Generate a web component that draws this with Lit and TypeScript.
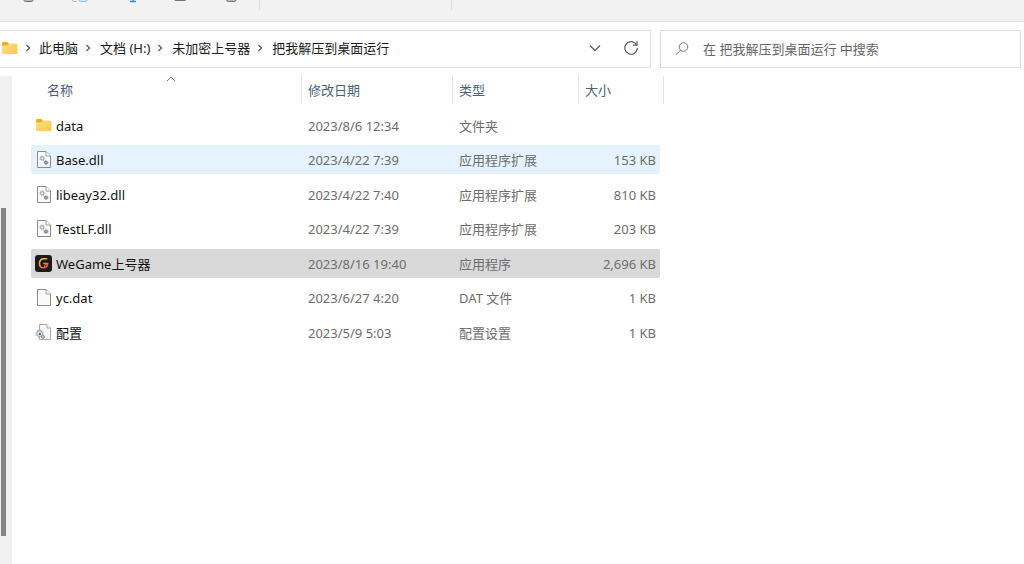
import { LitElement, html, css, svg } from "lit";
import { customElement } from "lit/decorators.js";
import { classMap } from "lit/directives/class-map.js";

type Kind = "folder" | "dll" | "wegame" | "file" | "config";

interface Entry {
  name: string;
  date: string;
  type: string;
  size: string;
  kind: Kind;
  state?: "hover" | "selected";
}

const entries: Entry[] = [
  { name: "data", date: "2023/8/6 12:34", type: "文件夹", size: "", kind: "folder" },
  { name: "Base.dll", date: "2023/4/22 7:39", type: "应用程序扩展", size: "153 KB", kind: "dll", state: "hover" },
  { name: "libeay32.dll", date: "2023/4/22 7:40", type: "应用程序扩展", size: "810 KB", kind: "dll" },
  { name: "TestLF.dll", date: "2023/4/22 7:39", type: "应用程序扩展", size: "203 KB", kind: "dll" },
  { name: "WeGame上号器", date: "2023/8/16 19:40", type: "应用程序", size: "2,696 KB", kind: "wegame", state: "selected" },
  { name: "yc.dat", date: "2023/6/27 4:20", type: "DAT 文件", size: "1 KB", kind: "file" },
  { name: "配置", date: "2023/5/9 5:03", type: "配置设置", size: "1 KB", kind: "config" },
];

const folder = svg`
  <defs><linearGradient id="fold" x1="0" y1="0" x2="1" y2="1">
    <stop offset="0" stop-color="#ffe08a"/><stop offset="1" stop-color="#fcc544"/>
  </linearGradient></defs>
  <path d="M1 3.200Q1 2 2.200 2H6.200L8 3.800H15Q16 3.800 16 4.800V7H1Z" fill="#efad1b"/>
  <path d="M1 5.400H6.200L7.800 4H15.800Q16.500 4 16.500 4.800V13Q16.500 14 15.500 14H2Q1 14 1 13Z" fill="url(#fold)"/>`;

const sheet = svg`<path d="M2.500 .5H11L15.500 5V16.500H2.500Z" fill="#fafafa" stroke="#8c8c8c"/>
  <path d="M11 .5V5H15.500" fill="#fff" stroke="#9a9a9a"/>`;

const icons = {
  folder,
  file: sheet,
  dll: svg`${sheet}
    <circle cx="7.200" cy="7.300" r="1.700" fill="#eef3f6" stroke="#a3b1bc" stroke-width="1.200"/>
    <circle cx="7.200" cy="7.300" r="2.600" fill="none" stroke="#a3b1bc" stroke-width=".8" stroke-dasharray="1 1.040"/>
    <circle cx="11" cy="11.500" r="1.300" fill="#b4b9bd" stroke="#77818a" stroke-width="1.100"/>
    <circle cx="11" cy="11.500" r="2.100" fill="none" stroke="#77818a" stroke-width=".7" stroke-dasharray=".8 .85"/>`,
  config: svg`<path d="M4.500 .5H12L15.500 4V15.500H4.500Z" fill="#f6f7f8" stroke="#a5abb0"/>
    <path d="M12 .5V4H15.500" fill="#fff" stroke="#a5abb0"/>
    <circle cx="4.600" cy="9.700" r="2.800" fill="#eef2f4" stroke="#9eabb4" stroke-width="1.100"/>
    <circle cx="4.600" cy="9.700" r="3.800" fill="none" stroke="#9eabb4" stroke-width=".9" stroke-dasharray="1.500 1.480"/>
    <circle cx="4.800" cy="10" r="1.200" fill="#5d6a73"/>
    <circle cx="8" cy="13" r="1.500" fill="#c5ccd1" stroke="#8a959d"/>`,
  wegame: svg`
    <defs><linearGradient id="wg" x1="0" y1="0" x2="0.7" y2="1">
      <stop offset="0" stop-color="#ffc53a"/><stop offset=".55" stop-color="#f89a3e"/><stop offset="1" stop-color="#ee5042"/>
    </linearGradient></defs>
    <rect x="0" y="0" width="17" height="17" rx="3" fill="#1c1b1c"/>
    <path d="M12.200 3.700H8.500Q4.500 4.200 4.500 8.400Q4.500 12.800 8.500 12.800Q12.500 12.800 12.700 8.400H8.300" fill="none" stroke="url(#wg)" stroke-width="1.500"/>
    <path d="M12.500 8.400Q9.700 9 9.300 12.200" fill="none" stroke="#f0703f" stroke-width="1"/>`,
};

@customElement("app-root")
export class AppRoot extends LitElement {
  static styles = css`
    :host {
      display: flex;
      flex-direction: column;
      min-height: 100vh;
      background: #fff;
      color: #1a1a1a;
      font: 13px/20px "Noto Sans", "Noto Sans CJK SC", sans-serif;
    }
    * { box-sizing: border-box; }
    svg { display: block; flex: none; }
    button {
      display: flex;
      margin: 0;
      padding: 0;
      border: 0;
      background: none;
      color: inherit;
      font: inherit;
    }
    .toolbar {
      display: flex;
      align-items: flex-start;
      height: 22px;
      background: #f2f2f2;
      border-bottom: 1px solid #e0e0e0;
      padding-left: 20px;
    }
    .toolbar button { width: 51px; }
    .split { width: 1px; height: 10px; background: #dedede; }
    .split.far { margin-left: 191px; }
    .toolbar button:nth-of-type(5) { width: 35px; }
    .bars {
      display: grid;
      grid-template-columns: 651fr 361fr;
      gap: 9px;
      padding: 8px 3px 8px 0;
    }
    .address, .search {
      display: flex;
      align-items: center;
      min-width: 0;
      height: 38px;
      border: 1px solid #dfdfdf;
      background: #fff;
    }
    .address {
      border-left: 0;
      padding: 0 11px 2px 1px;
    }
    .search { padding: 0 12px 1px; gap: 12px; }
    .search input {
      flex: 1;
      min-width: 0;
      padding: 0;
      border: 0;
      outline: 0;
      background: none;
      font: inherit;
      color: #5f5f5f;
    }
    .search input::placeholder { color: #666; opacity: 1; }
    .crumbs {
      display: flex;
      flex: 1;
      align-items: center;
      margin: 0;
      padding: 0;
      list-style: none;
      white-space: nowrap;
    }
    .crumbs li { display: flex; align-items: center; }
    .crumbs a { color: inherit; text-decoration: none; }
    .crumbs svg { margin: 0 8px 0 6px; }
    .crumbs li:first-child svg { margin: 0 7px 0 5px; }
    .tools { display: flex; align-items: center; gap: 20px; }
    .main { display: flex; flex: 1; }
    .track {
      display: flex;
      width: 12px;
      padding: 132px 0 28px 1px;
      background: #f0f0f0;
    }
    .thumb { width: 5px; background: #858585; }
    .list { display: block; margin-left: 19px; width: 633px; }
    thead, tbody { display: block; }
    tr {
      display: grid;
      grid-template-columns: 271px 151px 126px 1fr;
    }
    th {
      position: relative;
      height: 28px;
      padding: 4px 6px;
      border-right: 1px solid #e4e4e4;
      text-align: left;
      font-weight: 400;
      color: #4c607a;
    }
    th:first-child { padding-left: 16px; }
    .sort { position: absolute; left: 135px; top: 0; }
    tbody { padding: 7px 4px 0 0; }
    tbody tr {
      height: 29px;
      margin-bottom: 5px;
      align-items: center;
      border-radius: 2px;
    }
    tbody tr:nth-child(even) { margin-bottom: 6px; }
    tbody tr.hover { background: #e5f3ff; }
    tbody tr.selected { background: #d9d9d9; }
    td { padding: 0 6px; color: #6d6d6d; white-space: nowrap; }
    td:first-child { padding: 0 0 0 4px; color: #111; }
    td:last-child { padding: 0 4px; text-align: right; }
    .name { display: flex; align-items: center; gap: 4px; }
  `;

  private chevron() {
    return html`<svg width="8" height="10" viewBox="0 0 8 10" fill="none" stroke="#555" stroke-width="1.2"><path d="M2.5 2L5.5 5L2.5 8"/></svg>`;
  }

  render() {
    return html`
      <div class="toolbar">
        <button aria-label="剪切"><svg width="18" height="4"><path d="M4 0V.5Q4 1.500 6 1.500H11Q13 1.500 13 0" fill="#bbb" stroke="#747474"/></svg></button>
        <button aria-label="复制"><svg width="18" height="4"><path d="M1.500 0Q1.500 1.500 3 1.500H6" fill="none" stroke="#b5b5b5"/><path d="M8 0Q8 1.500 9.500 1.500H14Q16 1.500 16 0" fill="#cfe5f5" stroke="#91c1e4"/></svg></button>
        <button aria-label="重命名"><svg width="18" height="4"><path d="M8 1.500H14M11 0V1" fill="none" stroke="#338fd0" stroke-width="1.500"/></svg></button>
        <button aria-label="共享"><svg width="18" height="4"><path d="M1.500 0Q1.500 .5 3 .5H11Q13 .5 13 0" fill="none" stroke="#747474"/></svg></button>
        <button aria-label="删除"><svg width="18" height="4"><path d="M2.500 0Q2.500 1.500 4.500 1.500H10Q12 1.500 12 0" fill="#bbb" stroke="#747474"/></svg></button>
        <span class="split"></span><span class="split far"></span>
      </div>
      <div class="bars">
        <nav class="address" aria-label="地址">
          <svg width="18" height="16" viewBox="0 0 18 16">${folder}</svg>
          <ol class="crumbs">
            ${["此电脑", "文档 (H:)", "未加密上号器", "把我解压到桌面运行"].map(
              (c) => html`<li>${this.chevron()}<a href="#">${c}</a></li>`
            )}
          </ol>
          <div class="tools">
            <button aria-label="展开"><svg width="16" height="16" fill="none" stroke="#606060" stroke-width="1.300"><path d="M3 5.500L8 10.500L13 5.500"/></svg></button>
            <button aria-label="刷新"><svg width="16" height="16" fill="none" stroke="#606060" stroke-width="1.200"><path d="M13.700 5.200A6.300 6.300 0 1 0 14.300 8M14 1.200V5.200H10"/></svg></button>
          </div>
        </nav>
        <div class="search">
          <svg width="18" height="18" fill="none" stroke="#777"><circle cx="10.500" cy="7" r="4.300"/><path d="M7.500 10.200L3 14.700"/></svg>
          <input type="text" aria-label="搜索" placeholder="在 把我解压到桌面运行 中搜索" />
        </div>
      </div>
      <div class="main">
        <div class="track"><div class="thumb"></div></div>
        <table class="list">
          <thead>
            <tr>
              <th scope="col">名称<svg class="sort" width="10" height="6" fill="none" stroke="#777"><path d="M1 5L5 1L9 5"/></svg></th>
              <th scope="col">修改日期</th>
              <th scope="col">类型</th>
              <th scope="col">大小</th>
            </tr>
          </thead>
          <tbody>
            ${entries.map(
              (e) => html`<tr class=${classMap({ hover: e.state === "hover", selected: e.state === "selected" })}>
                <td><div class="name"><svg width="17" height="18" viewBox="0 0 17 18">${icons[e.kind]}</svg><span>${e.name}</span></div></td>
                <td>${e.date}</td>
                <td>${e.type}</td>
                <td>${e.size}</td>
              </tr>`
            )}
          </tbody>
        </table>
      </div>
    `;
  }
}
